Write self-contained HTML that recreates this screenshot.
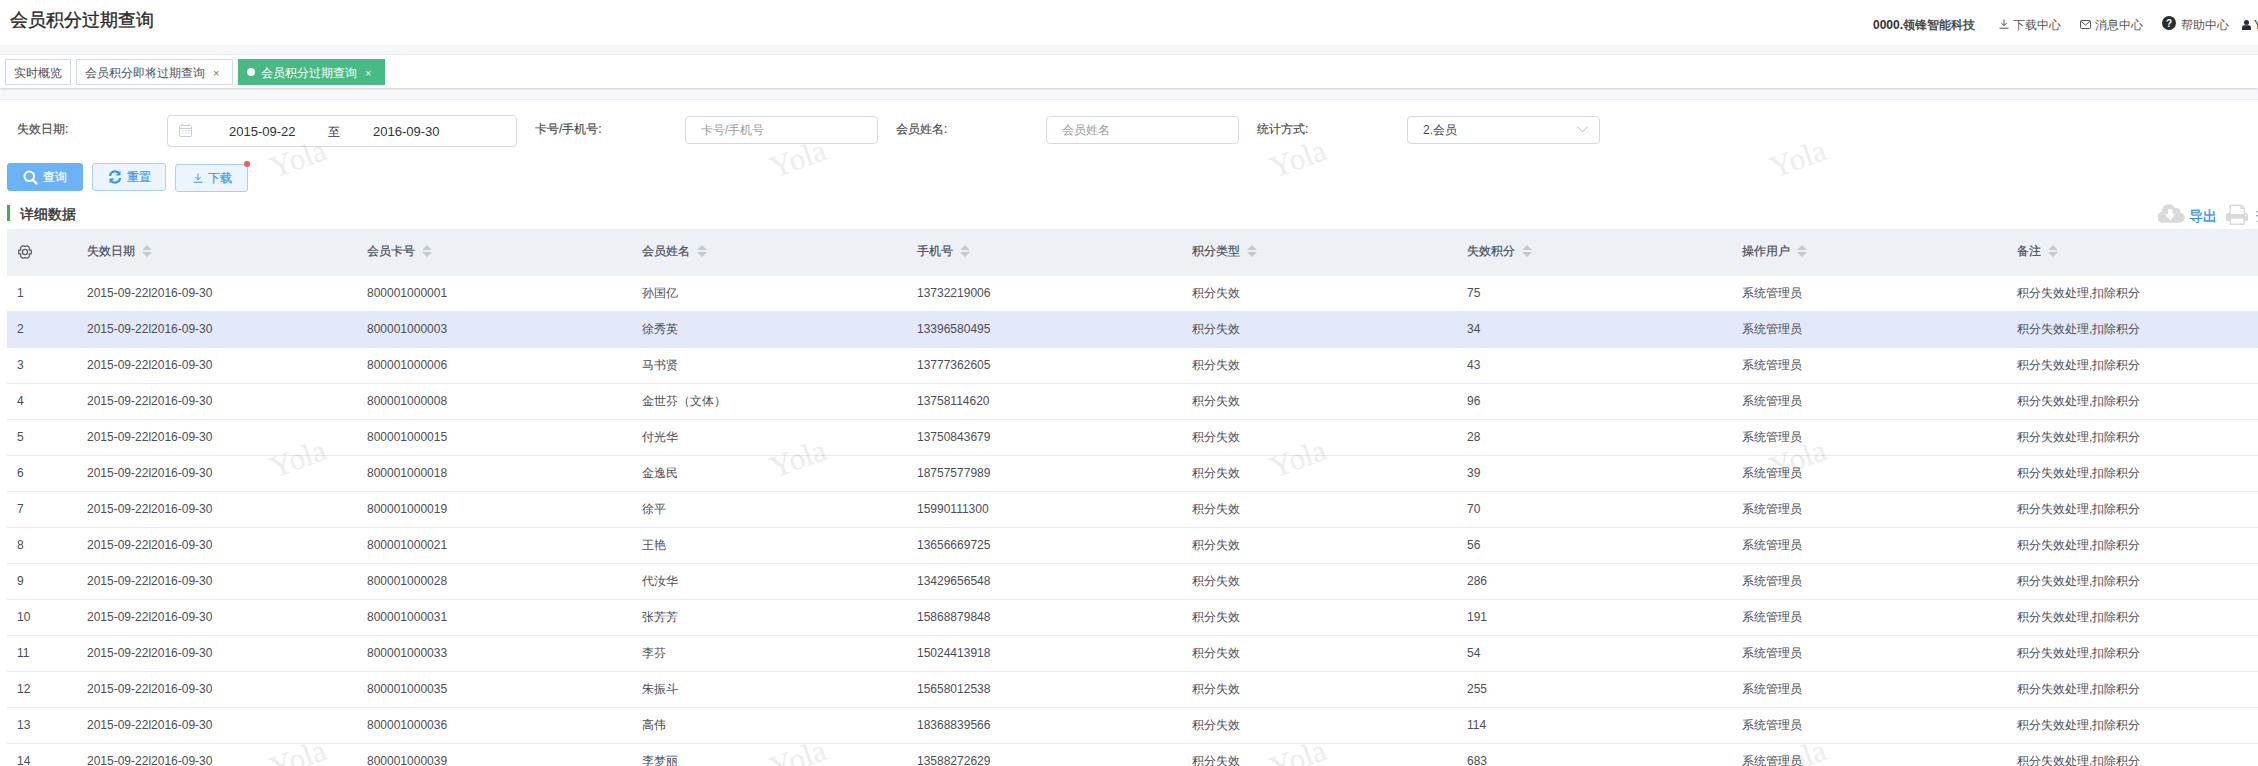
<!DOCTYPE html>
<html><head><meta charset="utf-8">
<style>
*{box-sizing:border-box;margin:0;padding:0}
html,body{width:2258px;height:766px;overflow:hidden;background:#fff}
body{font-family:"Liberation Sans",sans-serif;color:#333;position:relative}
.abs{position:absolute}
.title{left:10px;top:8px;font-size:18px;line-height:24px;color:#2b2b2b;-webkit-text-stroke:0.35px #2b2b2b}
.top{top:18px;font-size:12px;line-height:14px;color:#555;white-space:nowrap}
.band1{left:0;top:45px;width:2258px;height:10px;background:#f6f7fa}
.tabbar{left:0;top:55px;width:2258px;height:33px;background:#fff;box-shadow:0 1px 2px rgba(0,0,0,.16),0 -1px 1px rgba(0,0,0,.03);z-index:2}
.band2{left:0;top:88px;width:2258px;height:12px;background:#f6f7fa;border-bottom:1px solid #eceef3}
.tab{top:59px;height:26px;border:1px solid #d5d9e3;background:#fff;font-size:12px;line-height:26px;z-index:3;color:#4a505c;white-space:nowrap}
.tab .x{position:absolute;font-size:11px;color:#777;top:0}
.tab.on{background:#4aba85;border-color:#4aba85;color:#fff}
.tab.on .x{color:#e6f5ee}
.dot{position:absolute;left:8px;top:8px;width:8px;height:8px;border-radius:50%;background:#fff}
.lbl{font-size:12px;line-height:14px;color:#4a4a4a;font-weight:normal;-webkit-text-stroke:0.15px #4a4a4a;top:122px;white-space:nowrap}
.inp{top:116px;height:28px;border:1px solid #d7dae4;border-radius:4px;background:#fff;font-size:12px;color:#a9a9a9;line-height:26px;white-space:nowrap}
.btn{top:163px;height:28px;border-radius:3px;font-size:12px;line-height:26px;white-space:nowrap;-webkit-text-stroke:0.2px currentColor}
.sec{left:20px;top:206px;font-size:14px;line-height:16px;color:#333;-webkit-text-stroke:0.4px #333}
.hdr{left:7px;top:229px;width:2251px;height:47px;background:#edf0f5}
.th{top:244px;font-size:12px;line-height:14px;color:#4a4e57;-webkit-text-stroke:0.2px #4a4e57;white-space:nowrap}
.srt{margin-left:7px;vertical-align:-2px}
.row{left:7px;width:2251px;height:36px;border-bottom:1px solid #e7eaf2;font-size:12px;color:#4a4e57}
.row.hl{background:#e3e9f8}
.c{position:absolute;top:0;line-height:35px;white-space:nowrap}
.wm{position:absolute;width:100px;height:40px;text-align:center;font-family:"Liberation Serif",serif;font-size:31px;line-height:40px;color:#000;-webkit-text-stroke:0.25px #000;opacity:.065;transform:rotate(-20deg);pointer-events:none;white-space:nowrap}
</style></head><body>
<div class="abs title">会员积分过期查询</div>

<div class="abs top" style="left:1873px;color:#333"><b>0000.</b><span style="-webkit-text-stroke:0.3px #333">领锋智能科技</span></div>
<svg class="abs" style="left:1999px;top:19px" width="10" height="10" viewBox="0 0 10 10"><path d="M5 0.5V6.5M2.3 4L5 6.7L7.7 4M0.5 9.2H9.5" fill="none" stroke="#555" stroke-width="1"/></svg>
<div class="abs top" style="left:2013px">下载中心</div>
<svg class="abs" style="left:2080px;top:20px" width="11" height="9" viewBox="0 0 11 9"><rect x="0.5" y="0.5" width="10" height="8" rx="1" fill="none" stroke="#555" stroke-width="1"/><path d="M0.8 1.2L5.5 5L10.2 1.2" fill="none" stroke="#555" stroke-width="1"/></svg>
<div class="abs top" style="left:2095px">消息中心</div>
<svg class="abs" style="left:2162px;top:16px" width="14" height="14" viewBox="0 0 14 14"><circle cx="7" cy="7" r="7" fill="#2b2b2b"/><text x="7" y="11" font-family="Liberation Sans" font-weight="bold" font-size="10" fill="#fff" text-anchor="middle">?</text></svg>
<div class="abs top" style="left:2181px">帮助中心</div>
<svg class="abs" style="left:2242px;top:20px" width="9" height="10" viewBox="0 0 9 10"><circle cx="4.5" cy="2.5" r="2.5" fill="#2b2b2b"/><path d="M0 10V7.5Q0 5.2 2.5 5.2H6.5Q9 5.2 9 7.5V10Z" fill="#2b2b2b"/></svg>
<div class="abs top" style="left:2254px;color:#333">Y</div>

<div class="abs band1"></div>
<div class="abs tabbar"></div>
<div class="abs band2"></div>

<div class="abs tab" style="left:5px;width:66px;padding-left:8px">实时概览</div>
<div class="abs tab" style="left:76px;width:157px;padding-left:8px">会员积分即将过期查询<span class="x" style="left:136px">×</span></div>
<div class="abs tab on" style="left:238px;width:147px;padding-left:22px"><span class="dot"></span>会员积分过期查询<span class="x" style="left:126px">×</span></div>

<div class="abs lbl" style="left:17px">失效日期:</div>
<div class="abs inp" style="left:167px;top:115px;width:350px;height:32px;line-height:30px;color:#333;font-size:13px">
 <svg class="abs" style="left:11px;top:8px" width="13" height="13" viewBox="0 0 13 13"><rect x="0.5" y="1.5" width="12" height="11" rx="1" fill="none" stroke="#c8ccd6"/><path d="M0.5 4.5H12.5M3 0V2.5M10 0V2.5" stroke="#c8ccd6"/><path d="M3 6.5h1.5M6 6.5h1.5M9 6.5h1.5M3 9h1.5M6 9h1.5M9 9h1.5" stroke="#d4d7df"/></svg>
 <span class="abs" style="left:61px;top:1px">2015-09-22</span>
 <span class="abs" style="left:160px;top:1px;font-size:12px">至</span>
 <span class="abs" style="left:205px;top:1px">2016-09-30</span>
</div>
<div class="abs lbl" style="left:535px">卡号/手机号:</div>
<div class="abs inp" style="left:685px;width:193px;padding-left:15px;color:#9a9a9a">卡号/手机号</div>
<div class="abs lbl" style="left:896px">会员姓名:</div>
<div class="abs inp" style="left:1046px;width:193px;padding-left:15px;color:#9a9a9a">会员姓名</div>
<div class="abs lbl" style="left:1257px">统计方式:</div>
<div class="abs inp" style="left:1407px;width:193px;padding-left:15px;color:#454545">2.会员
 <svg class="abs" style="left:169px;top:9px" width="11" height="7" viewBox="0 0 11 7"><path d="M0.5 0.8L5.5 5.8L10.5 0.8" fill="none" stroke="#bbb" stroke-width="1"/></svg>
</div>

<div class="abs btn" style="left:7px;width:76px;background:#6cb2f7;color:#fff;border:1px solid #6cb2f7;padding-left:35px">查询
 <svg class="abs" style="left:15px;top:6px" width="15" height="15" viewBox="0 0 15 15"><circle cx="6.3" cy="6.3" r="4.8" fill="none" stroke="#fff" stroke-width="2"/><path d="M9.8 9.8L13.5 13.5" stroke="#fff" stroke-width="2.4" stroke-linecap="round"/></svg>
</div>
<div class="abs btn" style="left:92px;width:74px;background:#ecf5fe;color:#3a95ec;border:1px solid #a8d0f8;padding-left:34px">重置
 <svg class="abs" style="left:15px;top:6px" width="14" height="14" viewBox="0 0 14 14"><path d="M2 6A5 5 0 0 1 11.3 3.8" fill="none" stroke="#3a95ec" stroke-width="2.2"/><path d="M12.5 0.5V5.5H7.5Z" fill="#3a95ec"/><path d="M12 8A5 5 0 0 1 2.7 10.2" fill="none" stroke="#3a95ec" stroke-width="2.2"/><path d="M1.5 13.5V8.5H6.5Z" fill="#3a95ec"/></svg>
</div>
<div class="abs btn" style="left:175px;top:164px;width:73px;background:#ecf5fe;color:#3a95ec;border:1px solid #a8d0f8;padding-left:32px">下载
 <svg class="abs" style="left:17px;top:8px" width="10" height="10" viewBox="0 0 10 10"><path d="M5 0.5V6.5M2.3 4L5 6.7L7.7 4M0.5 9.2H9.5" fill="none" stroke="#3a95ec" stroke-width="1"/></svg>
</div>
<div class="abs" style="left:244px;top:161px;width:6px;height:6px;border-radius:50%;background:#f25a5a"></div>

<div class="abs" style="left:7px;top:205px;width:3px;height:16px;background:#3bb54a"></div>
<div class="abs sec">详细数据</div>

<svg class="abs" style="left:2158px;top:204px" width="27" height="19" viewBox="0 0 27 19"><path d="M5.8 18.8A5.5 5.5 0 0 1 3.9 7.8A6.8 6.8 0 0 1 16.9 4.3A3.6 3.6 0 0 1 22.2 8.3A5.3 5.3 0 0 1 20.6 18.8Z" fill="#d9d9d9"/><path d="M9.9 5.2H14.5V10.3H17.1L12.3 16.3L6.8 10.3H9.9Z" fill="#fff"/></svg>
<div class="abs" style="left:2189px;top:208px;font-size:14px;line-height:16px;color:#2d8cf0;-webkit-text-stroke:0.3px #2d8cf0">导出</div>
<svg class="abs" style="left:2226px;top:204px" width="22" height="21" viewBox="0 0 22 21"><rect x="0" y="9" width="22" height="8" rx="1.6" fill="#d9d9d9"/><path d="M4.3 10V1.2H15.4L18.2 4V10" fill="#fff" stroke="#d9d9d9" stroke-width="1.5"/><path d="M15 0.9V4.4H18.4" fill="none" stroke="#d9d9d9" stroke-width="1.3"/><rect x="4.3" y="13.9" width="13.9" height="6.3" rx="0.8" fill="#fff" stroke="#d9d9d9" stroke-width="1.5"/><circle cx="19.6" cy="11.5" r="0.9" fill="#fff"/></svg>
<div class="abs" style="left:2256px;top:207px;font-size:14px;line-height:16px;color:#2d8cf0">打</div>

<div class="abs hdr"></div>
<svg class="abs" style="left:17px;top:244px" width="16" height="16" viewBox="0 0 16 16"><path fill="none" stroke="#595959" stroke-width="1.2" stroke-linejoin="round" d="M14.30 6.20 L12.30 6.20 L12.30 3.20 L10.10 1.70 L8.00 2.40 L5.90 1.70 L3.70 3.20 L3.70 6.20 L1.70 6.20 L1.70 9.80 L3.70 9.80 L3.70 12.80 L5.90 14.30 L8.00 13.60 L10.10 14.30 L12.30 12.80 L12.30 9.80 L14.30 9.80Z"/><circle cx="8" cy="8" r="2.6" fill="none" stroke="#595959" stroke-width="1.2"/></svg>
<div class="abs th" style="left:87px">失效日期<svg class="srt" width="10" height="12" viewBox="0 0 10 12"><path d="M5 0L10 5H0Z M0 7H10L5 12Z" fill="#c3c8d3"/></svg></div>
<div class="abs th" style="left:367px">会员卡号<svg class="srt" width="10" height="12" viewBox="0 0 10 12"><path d="M5 0L10 5H0Z M0 7H10L5 12Z" fill="#c3c8d3"/></svg></div>
<div class="abs th" style="left:642px">会员姓名<svg class="srt" width="10" height="12" viewBox="0 0 10 12"><path d="M5 0L10 5H0Z M0 7H10L5 12Z" fill="#c3c8d3"/></svg></div>
<div class="abs th" style="left:917px">手机号<svg class="srt" width="10" height="12" viewBox="0 0 10 12"><path d="M5 0L10 5H0Z M0 7H10L5 12Z" fill="#c3c8d3"/></svg></div>
<div class="abs th" style="left:1192px">积分类型<svg class="srt" width="10" height="12" viewBox="0 0 10 12"><path d="M5 0L10 5H0Z M0 7H10L5 12Z" fill="#c3c8d3"/></svg></div>
<div class="abs th" style="left:1467px">失效积分<svg class="srt" width="10" height="12" viewBox="0 0 10 12"><path d="M5 0L10 5H0Z M0 7H10L5 12Z" fill="#c3c8d3"/></svg></div>
<div class="abs th" style="left:1742px">操作用户<svg class="srt" width="10" height="12" viewBox="0 0 10 12"><path d="M5 0L10 5H0Z M0 7H10L5 12Z" fill="#c3c8d3"/></svg></div>
<div class="abs th" style="left:2017px">备注<svg class="srt" width="10" height="12" viewBox="0 0 10 12"><path d="M5 0L10 5H0Z M0 7H10L5 12Z" fill="#c3c8d3"/></svg></div>
<div class="abs row" style="top:276px"><div class="c" style="left:10px">1</div><div class="c" style="left:80px">2015-09-22l2016-09-30</div><div class="c" style="left:360px">800001000001</div><div class="c" style="left:635px">孙国亿</div><div class="c" style="left:910px">13732219006</div><div class="c" style="left:1185px">积分失效</div><div class="c" style="left:1460px">75</div><div class="c" style="left:1735px">系统管理员</div><div class="c" style="left:2010px">积分失效处理,扣除积分</div></div>
<div class="abs row hl" style="top:312px"><div class="c" style="left:10px">2</div><div class="c" style="left:80px">2015-09-22l2016-09-30</div><div class="c" style="left:360px">800001000003</div><div class="c" style="left:635px">徐秀英</div><div class="c" style="left:910px">13396580495</div><div class="c" style="left:1185px">积分失效</div><div class="c" style="left:1460px">34</div><div class="c" style="left:1735px">系统管理员</div><div class="c" style="left:2010px">积分失效处理,扣除积分</div></div>
<div class="abs row" style="top:348px"><div class="c" style="left:10px">3</div><div class="c" style="left:80px">2015-09-22l2016-09-30</div><div class="c" style="left:360px">800001000006</div><div class="c" style="left:635px">马书贤</div><div class="c" style="left:910px">13777362605</div><div class="c" style="left:1185px">积分失效</div><div class="c" style="left:1460px">43</div><div class="c" style="left:1735px">系统管理员</div><div class="c" style="left:2010px">积分失效处理,扣除积分</div></div>
<div class="abs row" style="top:384px"><div class="c" style="left:10px">4</div><div class="c" style="left:80px">2015-09-22l2016-09-30</div><div class="c" style="left:360px">800001000008</div><div class="c" style="left:635px">金世芬（文体）</div><div class="c" style="left:910px">13758114620</div><div class="c" style="left:1185px">积分失效</div><div class="c" style="left:1460px">96</div><div class="c" style="left:1735px">系统管理员</div><div class="c" style="left:2010px">积分失效处理,扣除积分</div></div>
<div class="abs row" style="top:420px"><div class="c" style="left:10px">5</div><div class="c" style="left:80px">2015-09-22l2016-09-30</div><div class="c" style="left:360px">800001000015</div><div class="c" style="left:635px">付光华</div><div class="c" style="left:910px">13750843679</div><div class="c" style="left:1185px">积分失效</div><div class="c" style="left:1460px">28</div><div class="c" style="left:1735px">系统管理员</div><div class="c" style="left:2010px">积分失效处理,扣除积分</div></div>
<div class="abs row" style="top:456px"><div class="c" style="left:10px">6</div><div class="c" style="left:80px">2015-09-22l2016-09-30</div><div class="c" style="left:360px">800001000018</div><div class="c" style="left:635px">金逸民</div><div class="c" style="left:910px">18757577989</div><div class="c" style="left:1185px">积分失效</div><div class="c" style="left:1460px">39</div><div class="c" style="left:1735px">系统管理员</div><div class="c" style="left:2010px">积分失效处理,扣除积分</div></div>
<div class="abs row" style="top:492px"><div class="c" style="left:10px">7</div><div class="c" style="left:80px">2015-09-22l2016-09-30</div><div class="c" style="left:360px">800001000019</div><div class="c" style="left:635px">徐平</div><div class="c" style="left:910px">15990111300</div><div class="c" style="left:1185px">积分失效</div><div class="c" style="left:1460px">70</div><div class="c" style="left:1735px">系统管理员</div><div class="c" style="left:2010px">积分失效处理,扣除积分</div></div>
<div class="abs row" style="top:528px"><div class="c" style="left:10px">8</div><div class="c" style="left:80px">2015-09-22l2016-09-30</div><div class="c" style="left:360px">800001000021</div><div class="c" style="left:635px">王艳</div><div class="c" style="left:910px">13656669725</div><div class="c" style="left:1185px">积分失效</div><div class="c" style="left:1460px">56</div><div class="c" style="left:1735px">系统管理员</div><div class="c" style="left:2010px">积分失效处理,扣除积分</div></div>
<div class="abs row" style="top:564px"><div class="c" style="left:10px">9</div><div class="c" style="left:80px">2015-09-22l2016-09-30</div><div class="c" style="left:360px">800001000028</div><div class="c" style="left:635px">代汝华</div><div class="c" style="left:910px">13429656548</div><div class="c" style="left:1185px">积分失效</div><div class="c" style="left:1460px">286</div><div class="c" style="left:1735px">系统管理员</div><div class="c" style="left:2010px">积分失效处理,扣除积分</div></div>
<div class="abs row" style="top:600px"><div class="c" style="left:10px">10</div><div class="c" style="left:80px">2015-09-22l2016-09-30</div><div class="c" style="left:360px">800001000031</div><div class="c" style="left:635px">张芳芳</div><div class="c" style="left:910px">15868879848</div><div class="c" style="left:1185px">积分失效</div><div class="c" style="left:1460px">191</div><div class="c" style="left:1735px">系统管理员</div><div class="c" style="left:2010px">积分失效处理,扣除积分</div></div>
<div class="abs row" style="top:636px"><div class="c" style="left:10px">11</div><div class="c" style="left:80px">2015-09-22l2016-09-30</div><div class="c" style="left:360px">800001000033</div><div class="c" style="left:635px">李芬</div><div class="c" style="left:910px">15024413918</div><div class="c" style="left:1185px">积分失效</div><div class="c" style="left:1460px">54</div><div class="c" style="left:1735px">系统管理员</div><div class="c" style="left:2010px">积分失效处理,扣除积分</div></div>
<div class="abs row" style="top:672px"><div class="c" style="left:10px">12</div><div class="c" style="left:80px">2015-09-22l2016-09-30</div><div class="c" style="left:360px">800001000035</div><div class="c" style="left:635px">朱振斗</div><div class="c" style="left:910px">15658012538</div><div class="c" style="left:1185px">积分失效</div><div class="c" style="left:1460px">255</div><div class="c" style="left:1735px">系统管理员</div><div class="c" style="left:2010px">积分失效处理,扣除积分</div></div>
<div class="abs row" style="top:708px"><div class="c" style="left:10px">13</div><div class="c" style="left:80px">2015-09-22l2016-09-30</div><div class="c" style="left:360px">800001000036</div><div class="c" style="left:635px">高伟</div><div class="c" style="left:910px">18368839566</div><div class="c" style="left:1185px">积分失效</div><div class="c" style="left:1460px">114</div><div class="c" style="left:1735px">系统管理员</div><div class="c" style="left:2010px">积分失效处理,扣除积分</div></div>
<div class="abs row" style="top:744px"><div class="c" style="left:10px">14</div><div class="c" style="left:80px">2015-09-22l2016-09-30</div><div class="c" style="left:360px">800001000039</div><div class="c" style="left:635px">李梦丽</div><div class="c" style="left:910px">13588272629</div><div class="c" style="left:1185px">积分失效</div><div class="c" style="left:1460px">683</div><div class="c" style="left:1735px">系统管理员</div><div class="c" style="left:2010px">积分失效处理,扣除积分</div></div>
<div class="wm" style="left:248px;top:139px">Yola</div>
<div class="wm" style="left:748px;top:139px">Yola</div>
<div class="wm" style="left:1248px;top:139px">Yola</div>
<div class="wm" style="left:1748px;top:139px">Yola</div>
<div class="wm" style="left:248px;top:439px">Yola</div>
<div class="wm" style="left:748px;top:439px">Yola</div>
<div class="wm" style="left:1248px;top:439px">Yola</div>
<div class="wm" style="left:1748px;top:439px">Yola</div>
<div class="wm" style="left:248px;top:739px">Yola</div>
<div class="wm" style="left:748px;top:739px">Yola</div>
<div class="wm" style="left:1248px;top:739px">Yola</div>
<div class="wm" style="left:1748px;top:739px">Yola</div>
</body></html>
